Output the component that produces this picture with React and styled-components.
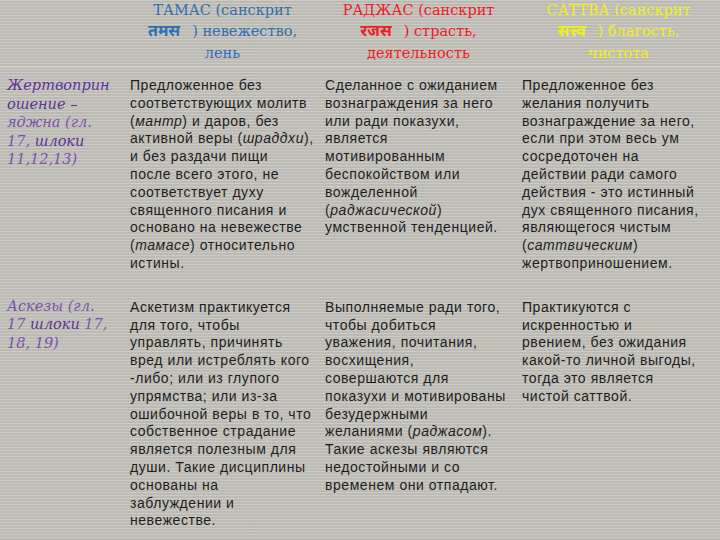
import React from "react";
import styled, { createGlobalStyle } from "styled-components";

const GlobalStyle = createGlobalStyle`
  html, body { margin: 0; padding: 0; }
  body { background: #c3c1ba; }
`;

const headers = [
  { color: "#2f70b0", top: "ТАМАС (санскрит", word: "तमस", rest: ") невежество,", last: "лень" },
  { color: "#ee1c24", top: "РАДЖАС (санскрит", word: "रजस", rest: ") страсть,", last: "деятельность" },
  { color: "#f0f01c", top: "САТТВА (санскрит", word: "सत्त्व", rest: ") благость,", last: "чистота" },
];

const rows = [
  {
    label: [
      <b key="a">Жертвоприн</b>,
      <b key="b">ошение –</b>,
      "яджна (гл.",
      <span key="c">17, <b>шлоки</b></span>,
      "11,12,13)",
    ],
    cells: [
      [
        "Предложенное без",
        "соответствующих молитв",
        <>(<i>мантр</i>) и даров, без</>,
        <>активной веры (<i>шраддхи</i>),</>,
        "и без раздачи пищи",
        "после всего этого, не",
        "соответствует духу",
        "священного писания и",
        "основано на невежестве",
        <>(<i>тамасе</i>) относительно</>,
        "истины.",
      ],
      [
        "Сделанное с ожиданием",
        "вознаграждения за него",
        "или ради показухи,",
        "является",
        "мотивированным",
        "беспокойством или",
        "вожделенной",
        <>(<i>раджасической</i>)</>,
        "умственной тенденцией.",
      ],
      [
        "Предложенное без",
        "желания получить",
        "вознаграждение за него,",
        "если при этом весь ум",
        "сосредоточен на",
        "действии ради самого",
        "действия - это истинный",
        "дух священного писания,",
        "являющегося чистым",
        <>(<i>саттвическим</i>)</>,
        "жертвоприношением.",
      ],
    ],
  },
  {
    label: [
      "Аскезы (гл.",
      <span key="a">17 <b>шлоки</b> 17,</span>,
      "18, 19)",
    ],
    cells: [
      [
        "Аскетизм практикуется",
        "для того, чтобы",
        "управлять, причинять",
        "вред или истреблять кого",
        "-либо; или из глупого",
        "упрямства; или из-за",
        "ошибочной веры в то, что",
        "собственное страдание",
        "является полезным для",
        "души. Такие дисциплины",
        "основаны на",
        "заблуждении и",
        "невежестве.",
      ],
      [
        "Выполняемые ради того,",
        "чтобы добиться",
        "уважения, почитания,",
        "восхищения,",
        "совершаются для",
        "показухи и мотивированы",
        "безудержными",
        <>желаниями (<i>раджасом</i>).</>,
        "Такие аскезы являются",
        "недостойными и со",
        "временем они отпадают.",
      ],
      [
        "Практикуются с",
        "искренностью и",
        "рвением, без ожидания",
        "какой-то личной выгоды,",
        "тогда это является",
        "чистой саттвой.",
      ],
    ],
  },
];

const Page = styled.div`
  width: 720px;
  height: 540px;
  overflow: hidden;
  background-color: #c3c1ba;
  background-image: repeating-linear-gradient(
    180deg,
    rgba(255, 255, 255, 0.14) 0px,
    rgba(255, 255, 255, 0.14) 1px,
    rgba(0, 0, 0, 0.035) 1px,
    rgba(0, 0, 0, 0.035) 3px
  );
`;

const Grid = styled.div`
  display: grid;
  grid-template-columns: 125px 195px 197px 1fr;
`;

const HeadRow = styled.div`
  display: contents;
`;

const HeadCell = styled.div`
  color: ${(p) => p.color};
  font-family: "DejaVu Serif", "Liberation Serif", "Noto Sans", serif;
  font-size: 14.5px;
  line-height: 21px;
  text-align: center;
  padding: 0 0 2px;
  border-bottom: 2px solid rgba(255, 255, 255, 0.18);
  white-space: nowrap;
`;

const Deva = styled.b`
  font-family: "Noto Sans Devanagari", "Noto Sans", sans-serif;
  font-size: 16px;
  font-weight: 700;
  margin-right: 12px;
`;

const LabelCell = styled.div`
  padding: ${(p) => (p.first ? "8px" : "24px")} 0 0 7px;
  font-family: "DejaVu Serif", "Liberation Serif", serif;
  font-style: italic;
  font-size: 14.5px;
  line-height: 18.5px;
  color: #7a52ae;
  b { font-weight: 400; color: #5e3496; }
`;

const TextCell = styled.div`
  padding: ${(p) => (p.first ? "9px" : "26px")} 0 0 5px;
  font-family: "Liberation Sans", Arial, sans-serif;
  font-size: 14px;
  line-height: 17.8px;
  letter-spacing: 0.55px;
  color: #1e1e1e;
  i { font-style: italic; }
`;

const Line = styled.div`
  white-space: nowrap;
`;

export default function App() {
  return (
    <Page>
      <GlobalStyle />
      <Grid>
        <HeadRow>
          <HeadCell color="transparent" />
          {headers.map((h) => (
            <HeadCell key={h.top} color={h.color}>
              <Line>{h.top}</Line>
              <Line>
                <Deva>{h.word}</Deva>
                {h.rest}
              </Line>
              <Line>{h.last}</Line>
            </HeadCell>
          ))}
        </HeadRow>
        {rows.map((r, ri) => (
          <React.Fragment key={ri}>
            <LabelCell first={ri === 0}>
              {r.label.map((l, i) => (
                <Line key={i}>{l}</Line>
              ))}
            </LabelCell>
            {r.cells.map((c, ci) => (
              <TextCell key={ci} first={ri === 0}>
                {c.map((l, i) => (
                  <Line key={i}>{l}</Line>
                ))}
              </TextCell>
            ))}
          </React.Fragment>
        ))}
      </Grid>
    </Page>
  );
}
